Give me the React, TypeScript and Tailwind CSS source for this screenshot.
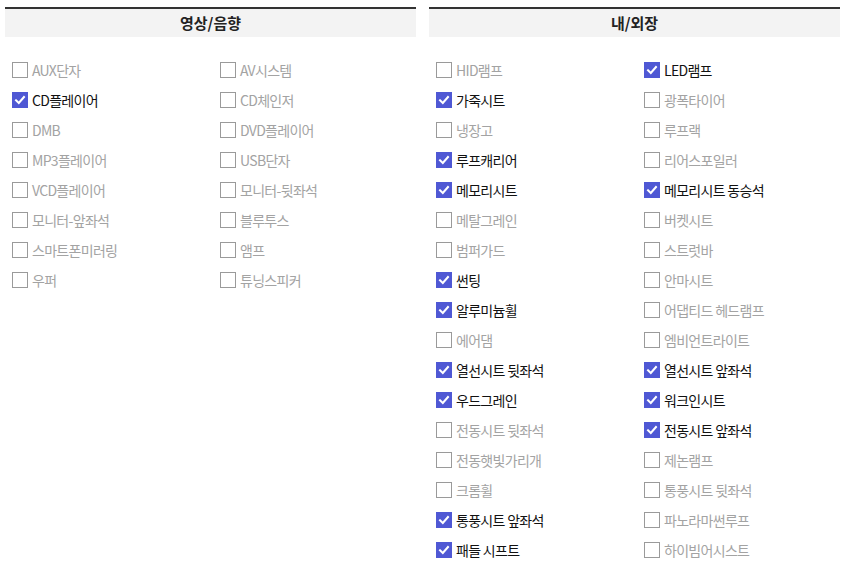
import React from "react";

type Item = [string, boolean];

const left: Item[] = [
  ["AUX단자", false], ["AV시스템", false],
  ["CD플레이어", true], ["CD체인저", false],
  ["DMB", false], ["DVD플레이어", false],
  ["MP3플레이어", false], ["USB단자", false],
  ["VCD플레이어", false], ["모니터-뒷좌석", false],
  ["모니터-앞좌석", false], ["블루투스", false],
  ["스마트폰미러링", false], ["앰프", false],
  ["우퍼", false], ["튜닝스피커", false],
];

const right: Item[] = [
  ["HID램프", false], ["LED램프", true],
  ["가죽시트", true], ["광폭타이어", false],
  ["냉장고", false], ["루프랙", false],
  ["루프캐리어", true], ["리어스포일러", false],
  ["메모리시트", true], ["메모리시트 동승석", true],
  ["메탈그레인", false], ["버켓시트", false],
  ["범퍼가드", false], ["스트럿바", false],
  ["썬팅", true], ["안마시트", false],
  ["알루미늄휠", true], ["어댑티드 헤드램프", false],
  ["에어댐", false], ["엠비언트라이트", false],
  ["열선시트 뒷좌석", true], ["열선시트 앞좌석", true],
  ["우드그레인", true], ["워크인시트", true],
  ["전동시트 뒷좌석", false], ["전동시트 앞좌석", true],
  ["전동햇빛가리개", false], ["제논램프", false],
  ["크롬휠", false], ["통풍시트 뒷좌석", false],
  ["통풍시트 앞좌석", true], ["파노라마썬루프", false],
  ["패들 시프트", true], ["하이빔어시스트", false],
];

function Box({ checked }: { checked: boolean }) {
  if (checked) {
    return (
      <span className="flex h-[16px] w-[16px] shrink-0 items-center justify-center bg-[#4f58d4]">
        <svg width="12" height="12" viewBox="0 0 12 12" fill="none">
          <path d="M2 6.3 L4.8 9 L10 3" stroke="white" strokeWidth="2" strokeLinecap="square" />
        </svg>
      </span>
    );
  }
  return <span className="h-[16px] w-[16px] shrink-0 border border-[#9a9a9a] bg-white" />;
}

function Panel({ title, items }: { title: string; items: Item[] }) {
  return (
    <div className="w-[411px]">
      <div className="flex h-[30px] items-center justify-center border-t-2 border-[#333] bg-[#f3f3f3] text-[15px] font-bold text-[#222]">
        {title}
      </div>
      <div className="mt-[18px] grid grid-cols-[208px_1fr] pl-[7px]">
        {items.map(([label, checked], i) => (
          <div key={i} className="flex h-[30px] items-center gap-[4px]">
            <Box checked={checked} />
            <span
              className={
                "text-[14px] tracking-[-0.7px] " + (checked ? "text-[#111]" : "text-[#a3a3a3]")
              }
            >
              {label}
            </span>
          </div>
        ))}
      </div>
    </div>
  );
}

export default function App() {
  return (
    <div
      className="flex h-[577px] w-[848px] gap-[13px] bg-white pl-[5px] pt-[7px]"
      style={{ fontFamily: '"Noto Sans CJK KR", "Noto Sans", sans-serif' }}
    >
      <Panel title="영상/음향" items={left} />
      <Panel title="내/외장" items={right} />
    </div>
  );
}
